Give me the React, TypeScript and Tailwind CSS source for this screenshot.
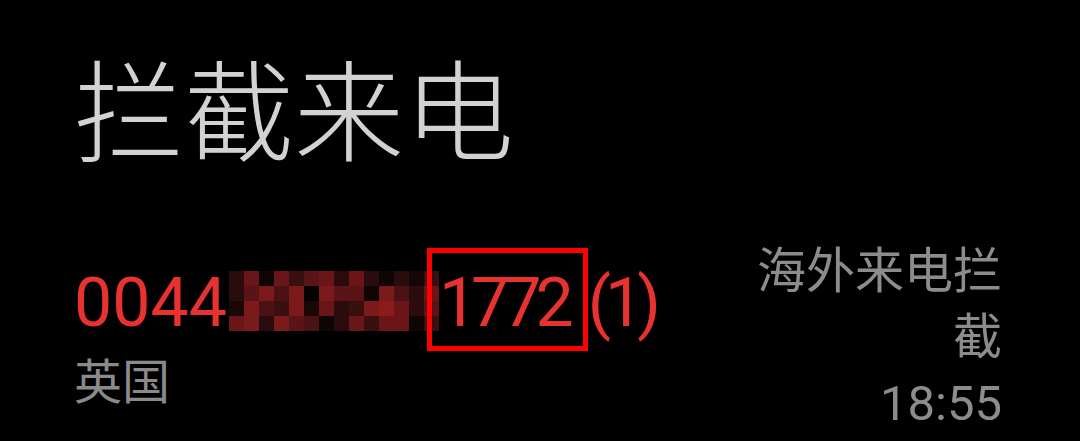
const mosaic = [
  "bg-[#2a0c0e]", "bg-[#6a1618]", "bg-[#0f0505]", "bg-[#6a1618]", "bg-[#3a0f10]", "bg-[#5a1418]", "bg-[#6a1618]", "bg-[#2a0c0e]", "bg-[#6a1618]", "bg-[#2a0c0e]", "bg-[#0f0505]", "bg-[#2a0c0e]", "bg-[#150707]", "bg-[#3a0f10]",
  "bg-[#2a0c0e]", "bg-[#5a1418]", "bg-[#7a1a1a]", "bg-[#4a1214]", "bg-[#7a1a1a]", "bg-[#050202]", "bg-[#7a1a1a]", "bg-[#5a1418]", "bg-[#5a1418]", "bg-[#100505]", "bg-[#7a1a1a]", "bg-[#4a1214]", "bg-[#2a0c0e]", "bg-[#6a1618]",
  "bg-[#1a0707]", "bg-[#7a1a1a]", "bg-[#4a1214]", "bg-[#3a0f10]", "bg-[#7a1a1a]", "bg-[#1a0707]", "bg-[#6a1618]", "bg-[#2a0c0e]", "bg-[#3a0f10]", "bg-[#7a1a1a]", "bg-[#8a1c1c]", "bg-[#6a1618]", "bg-[#2a0c0e]", "bg-[#5a1418]",
  "bg-[#6a1618]", "bg-[#7a1a1a]", "bg-[#2a0c0e]", "bg-[#7a1a1a]", "bg-[#5a1418]", "bg-[#4a1214]", "bg-[#100505]", "bg-[#2a0c0e]", "bg-[#6a1618]", "bg-[#3a0f10]", "bg-[#6a1618]", "bg-[#6a1618]", "bg-[#100505]", "bg-[#3a0f10]",
]

export default function App() {
  return (
    <div className="w-[1080px] h-[441px] bg-black overflow-hidden font-[Roboto,'Noto_Sans_CJK_SC',sans-serif]">
      <h1 className="pl-[74px] pt-[61px] text-[110px] leading-[110px] font-light text-[#d2d2d2]">拦截来电</h1>

      <div className="flex justify-between items-start pl-[74px] pr-[78px] mt-[68px]">
        <div className="mt-[17px]">
          <div className="whitespace-nowrap text-[68px] leading-[94px] text-[#e8322f]">
            0044
            <span className="inline-block align-top mt-[15px] ml-[2px]">
              <span className="grid grid-cols-[repeat(14,15px)] grid-rows-[repeat(4,15px)]">
                {mosaic.map((c, i) => (
                  <span key={i} className={c} />
                ))}
              </span>
            </span>
            <span className="relative tracking-[-6px]">
              1772
              <span className="absolute -left-[12px] -right-[20px] -top-[15px] -bottom-[8px] border-[5px] border-[#ff0000]" />
            </span>
            <span className="ml-[20px] tracking-[-6px]">(1)</span>
          </div>
          <div className="text-[48px] leading-[66px] text-[#8a8a8a]">英国</div>
        </div>

        <div className="w-[256px] text-right text-[49px] leading-[66px] text-[#8c8c8c]">
          <p>海外来电拦截</p>
          <p>18:55</p>
        </div>
      </div>
    </div>
  )
}
